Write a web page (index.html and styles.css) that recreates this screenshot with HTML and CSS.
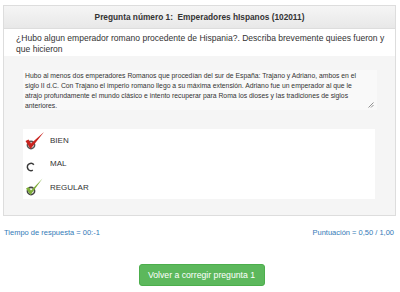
FILE: index.html
```html
<!DOCTYPE html>
<html lang="es">
<head>
<meta charset="utf-8">
<link rel="stylesheet" href="styles.css">
</head>
<body>
<div class="panel">
  <div class="panel-heading">Pregunta número 1:&nbsp; Emperadores hIspanos (102011)</div>
  <div class="question">¿Hubo algun emperador romano procedente de Hispania?. Describa brevemente quiees fueron y que hicieron</div>
  <div class="answer-area">
    <div class="answer-text">Hubo al menos dos emperadores Romanos que procedían del sur de España: Trajano y Adriano, ambos en el siglo II d.C. Con Trajano el imperio romano llego a su máxima extensión. Adriano fue un emperador al que le atrajo profundamente el mundo clásico e intento recuperar para Roma los dioses y las tradiciones de siglos anteriores.
      <svg class="grip" width="6" height="6" viewBox="0 0 6 6"><path d="M5.5 0.5 L0.5 5.5 M5.5 3 L3 5.5" stroke="#777" stroke-width="0.8" fill="none"/></svg>
    </div>
    <div class="options">
      <div class="option">
        <svg class="icon" width="20" height="20" viewBox="0 0 20 20">
          <circle cx="6" cy="14" r="3.6" fill="#fff" stroke="#555" stroke-width="1.6"/>
          <path d="M0.5 10 L5.5 18 L19 1 L6 12.5 L3.5 8.5 Z" fill="#c8231e"/>
        </svg>
        <span>BIEN</span>
      </div>
      <div class="option">
        <svg class="icon" width="20" height="20" viewBox="0 0 20 20">
          <circle cx="6" cy="13" r="3.6" fill="#fff" stroke="#3a3a3a" stroke-width="1.6" stroke-dasharray="16 7" transform="rotate(60 6 13)"/>
        </svg>
        <span>MAL</span>
      </div>
      <div class="option">
        <svg class="icon" width="20" height="20" viewBox="0 0 20 20">
          <circle cx="6" cy="14" r="3.6" fill="#fff" stroke="#444" stroke-width="1.6"/>
          <path d="M1 11.5 L5.5 18 L17.5 1.5 L6 13.5 L3.5 10 Z" fill="#7fae3a"/>
        </svg>
        <span>REGULAR</span>
      </div>
    </div>
  </div>
</div>
<div class="footer">
  <span>Tiempo de respuesta = 00:-1</span>
  <span>Puntuación = 0,50 / 1,00</span>
</div>
<div class="actions">
  <button class="btn">Volver a corregir pregunta 1</button>
</div>
</body>
</html>
```
FILE: styles.css
```css
html, body {
  margin: 0;
  padding: 0;
  background: #fff;
  font-family: "Liberation Sans", Arial, sans-serif;
  color: #333;
}
body {
  padding: 5px 4px 0 3px;
}
.panel {
  border: 1px solid #ddd;
  background: #f5f5f5;
}
.panel-heading {
  height: 22px;
  line-height: 22px;
  text-align: center;
  font-weight: bold;
  font-size: 8.3px;
  color: #333;
  background: linear-gradient(#f5f5f5, #e8e8e8);
  border-bottom: 1px solid #ddd;
}
.question {
  background: #fff;
  font-size: 8.55px;
  line-height: 11px;
  padding: 4px 4px 1px 12px;
}
.answer-area {
  padding: 14px 18px 16px 19px;
}
.answer-text {
  position: relative;
  box-sizing: border-box;
  background: #f9f9f9;
  font-size: 6.8px;
  line-height: 10px;
  padding: 1px 18px 0 2px;
  height: 40px;
  color: #333;
}
.grip {
  position: absolute;
  right: 3px;
  bottom: 2px;
}
.options {
  box-sizing: border-box;
  margin-top: 19px;
  height: 70px;
  background: #fff;
  padding: 0 0 0 2px;
  margin-right: 2px;
}
.option {
  display: flex;
  align-items: center;
  height: 23.3px;
  font-size: 8px;
}
.option .icon {
  width: 20px;
  height: 20px;
  margin-right: 5px;
}
.footer {
  display: flex;
  justify-content: space-between;
  margin: 12px 2px 0 1px;
  font-size: 7.5px;
  color: #337ab7;
}
.actions {
  display: flex;
  justify-content: center;
  margin-top: 27px;
}
.btn {
  background: #5cb85c;
  border: 1px solid #4cae4c;
  color: #fff;
  font-family: "Liberation Sans", Arial, sans-serif;
  font-size: 8.7px;
  width: 126px;
  height: 22px;
  border-radius: 3px;
  padding: 0;
  margin-left: 4px;
}
```
